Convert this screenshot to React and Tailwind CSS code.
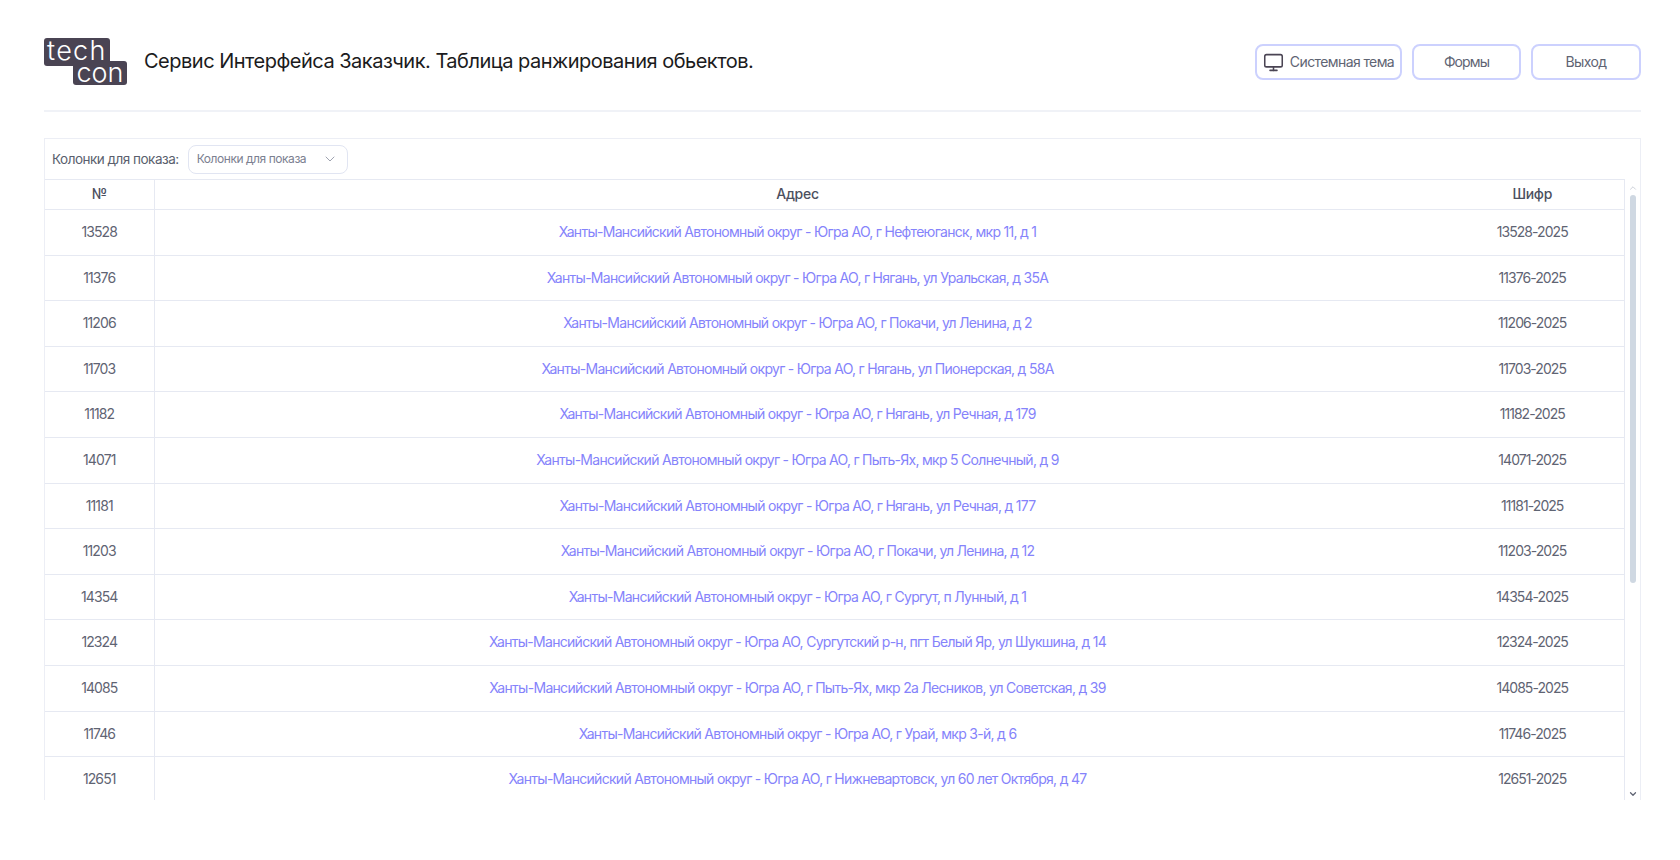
import { ChevronDown, ChevronUp, Monitor } from 'lucide-react';

const rows = [
  ['13528', 'Ханты-Мансийский Автономный округ - Югра АО, г Нефтеюганск, мкр 11, д 1'],
  ['11376', 'Ханты-Мансийский Автономный округ - Югра АО, г Нягань, ул Уральская, д 35А'],
  ['11206', 'Ханты-Мансийский Автономный округ - Югра АО, г Покачи, ул Ленина, д 2'],
  ['11703', 'Ханты-Мансийский Автономный округ - Югра АО, г Нягань, ул Пионерская, д 58А'],
  ['11182', 'Ханты-Мансийский Автономный округ - Югра АО, г Нягань, ул Речная, д 179'],
  ['14071', 'Ханты-Мансийский Автономный округ - Югра АО, г Пыть-Ях, мкр 5 Солнечный, д 9'],
  ['11181', 'Ханты-Мансийский Автономный округ - Югра АО, г Нягань, ул Речная, д 177'],
  ['11203', 'Ханты-Мансийский Автономный округ - Югра АО, г Покачи, ул Ленина, д 12'],
  ['14354', 'Ханты-Мансийский Автономный округ - Югра АО, г Сургут, п Лунный, д 1'],
  ['12324', 'Ханты-Мансийский Автономный округ - Югра АО, Сургутский р-н, пгт Белый Яр, ул Шукшина, д 14'],
  ['14085', 'Ханты-Мансийский Автономный округ - Югра АО, г Пыть-Ях, мкр 2а Лесников, ул Советская, д 39'],
  ['11746', 'Ханты-Мансийский Автономный округ - Югра АО, г Урай, мкр 3-й, д 6'],
  ['12651', 'Ханты-Мансийский Автономный округ - Югра АО, г Нижневартовск, ул 60 лет Октября, д 47'],
];

const Logo = () => (
  <svg width="84" height="48" viewBox="0 0 84 48" className="shrink-0 overflow-visible">
    <rect x="0" y="0" width="66" height="28" rx="3" fill="#4a4453" />
    <rect x="29" y="23" width="54" height="24" rx="3" fill="#4a4453" />
    <text x="3" y="22" fontSize="27" fontWeight="300" letterSpacing="1.3" fill="#fff" fontFamily="Inter, sans-serif">tech</text>
    <text x="32.5" y="44" fontSize="27" fontWeight="300" fill="#fff" fontFamily="Inter, sans-serif">con</text>
  </svg>
);

const HeaderButton = ({ className, children }) => (
  <button className={`flex h-[36px] items-center justify-center rounded-lg border-2 border-[#ccd1fe] pb-[2px] text-[14px] tracking-[-0.6px] text-[#5f6473] ${className}`}>
    {children}
  </button>
);

export default function App() {
  return (
    <div className="h-[860px] overflow-hidden bg-white pl-[44px] pr-[39px] pt-[38px] font-['Inter',sans-serif]">
      {/* Header */}
      <div className="flex h-[74px] items-start justify-between border-b-2 border-[#f0f2f7]">
        <div className="flex items-center gap-[16px]">
          <Logo />
          <h1 className="pb-[2px] text-[20px] tracking-[-0.5px] text-[#1b1b20]">
            Сервис Интерфейса Заказчик. Таблица ранжирования обьектов.
          </h1>
        </div>
        <div className="mt-[6px] flex gap-[10px]">
          <HeaderButton className="w-[147px] gap-[6px]">
            <Monitor size={21} strokeWidth={1.75} className="mt-[2px] text-[#4a4453]" />
            <span>Системная тема</span>
          </HeaderButton>
          <HeaderButton className="w-[109px] tracking-[-0.9px]">Формы</HeaderButton>
          <HeaderButton className="w-[110px]">Выход</HeaderButton>
        </div>
      </div>

      {/* Table block */}
      <div className="mt-[26px] border border-b-0 border-[#eceef5]">
        <div className="flex h-[40px] items-center gap-[9px] pl-[7px]">
          <span className="text-[13.5px] tracking-[-0.5px] text-[#5a5f6e]">Колонки для показа:</span>
          <div className="flex h-[29px] w-[160px] items-center justify-between rounded-lg border-[1.5px] border-[#e1e5f2] pb-[1px] pl-[8px] pr-[9px] text-[12px] tracking-[-0.45px] text-[#7b8090]">
            Колонки для показа
            <ChevronDown size={16} strokeWidth={1.25} className="text-[#8b90a0]" />
          </div>
        </div>

        <div className="flex">
          <div className="h-[621px] min-w-0 flex-1 overflow-hidden">
            <table className="w-full table-fixed border-collapse">
              <colgroup>
                <col className="w-[109px]" />
                <col />
                <col className="w-[184px]" />
              </colgroup>
              <thead>
                <tr className="h-[30px] text-[14px] tracking-[-0.3px] text-[#4c5060]">
                  <th className="border-y border-r border-[#e6e9f2] pb-[2px] font-medium">№</th>
                  <th className="border-y border-[#e6e9f2] pb-[2px] font-medium">Адрес</th>
                  <th className="border-y border-r border-[#e6e9f2] pb-[2px] font-medium">Шифр</th>
                </tr>
              </thead>
              <tbody>
                {rows.map(([id, address]) => (
                  <tr key={id} className="h-[45.6px] text-[14px] tracking-[-0.71px]">
                    <td className="border-b border-r border-[#e6e9f2] pb-[1.5px] text-center tracking-[-0.9px] text-[#5f6473]">{id}</td>
                    <td className="border-b border-[#e6e9f2] pb-[1.5px] text-center text-[#8583fb]">{address}</td>
                    <td className="border-b border-r border-[#e6e9f2] pb-[1.5px] text-center tracking-[-0.95px] text-[#5f6473]">{id}-2025</td>
                  </tr>
                ))}
              </tbody>
            </table>
          </div>

          {/* Scrollbar */}
          <div className="flex w-[15px] flex-col items-center">
            <ChevronUp size={10} strokeWidth={2} className="mt-[4px] text-[#c3c8d2]" />
            <div className="mt-[2px] h-[388px] w-[6px] rounded-full bg-[#cfd8e2]" />
            <ChevronDown size={10} strokeWidth={3} className="mb-[1px] mt-auto text-[#5f6473]" />
          </div>
        </div>
      </div>
    </div>
  );
}
